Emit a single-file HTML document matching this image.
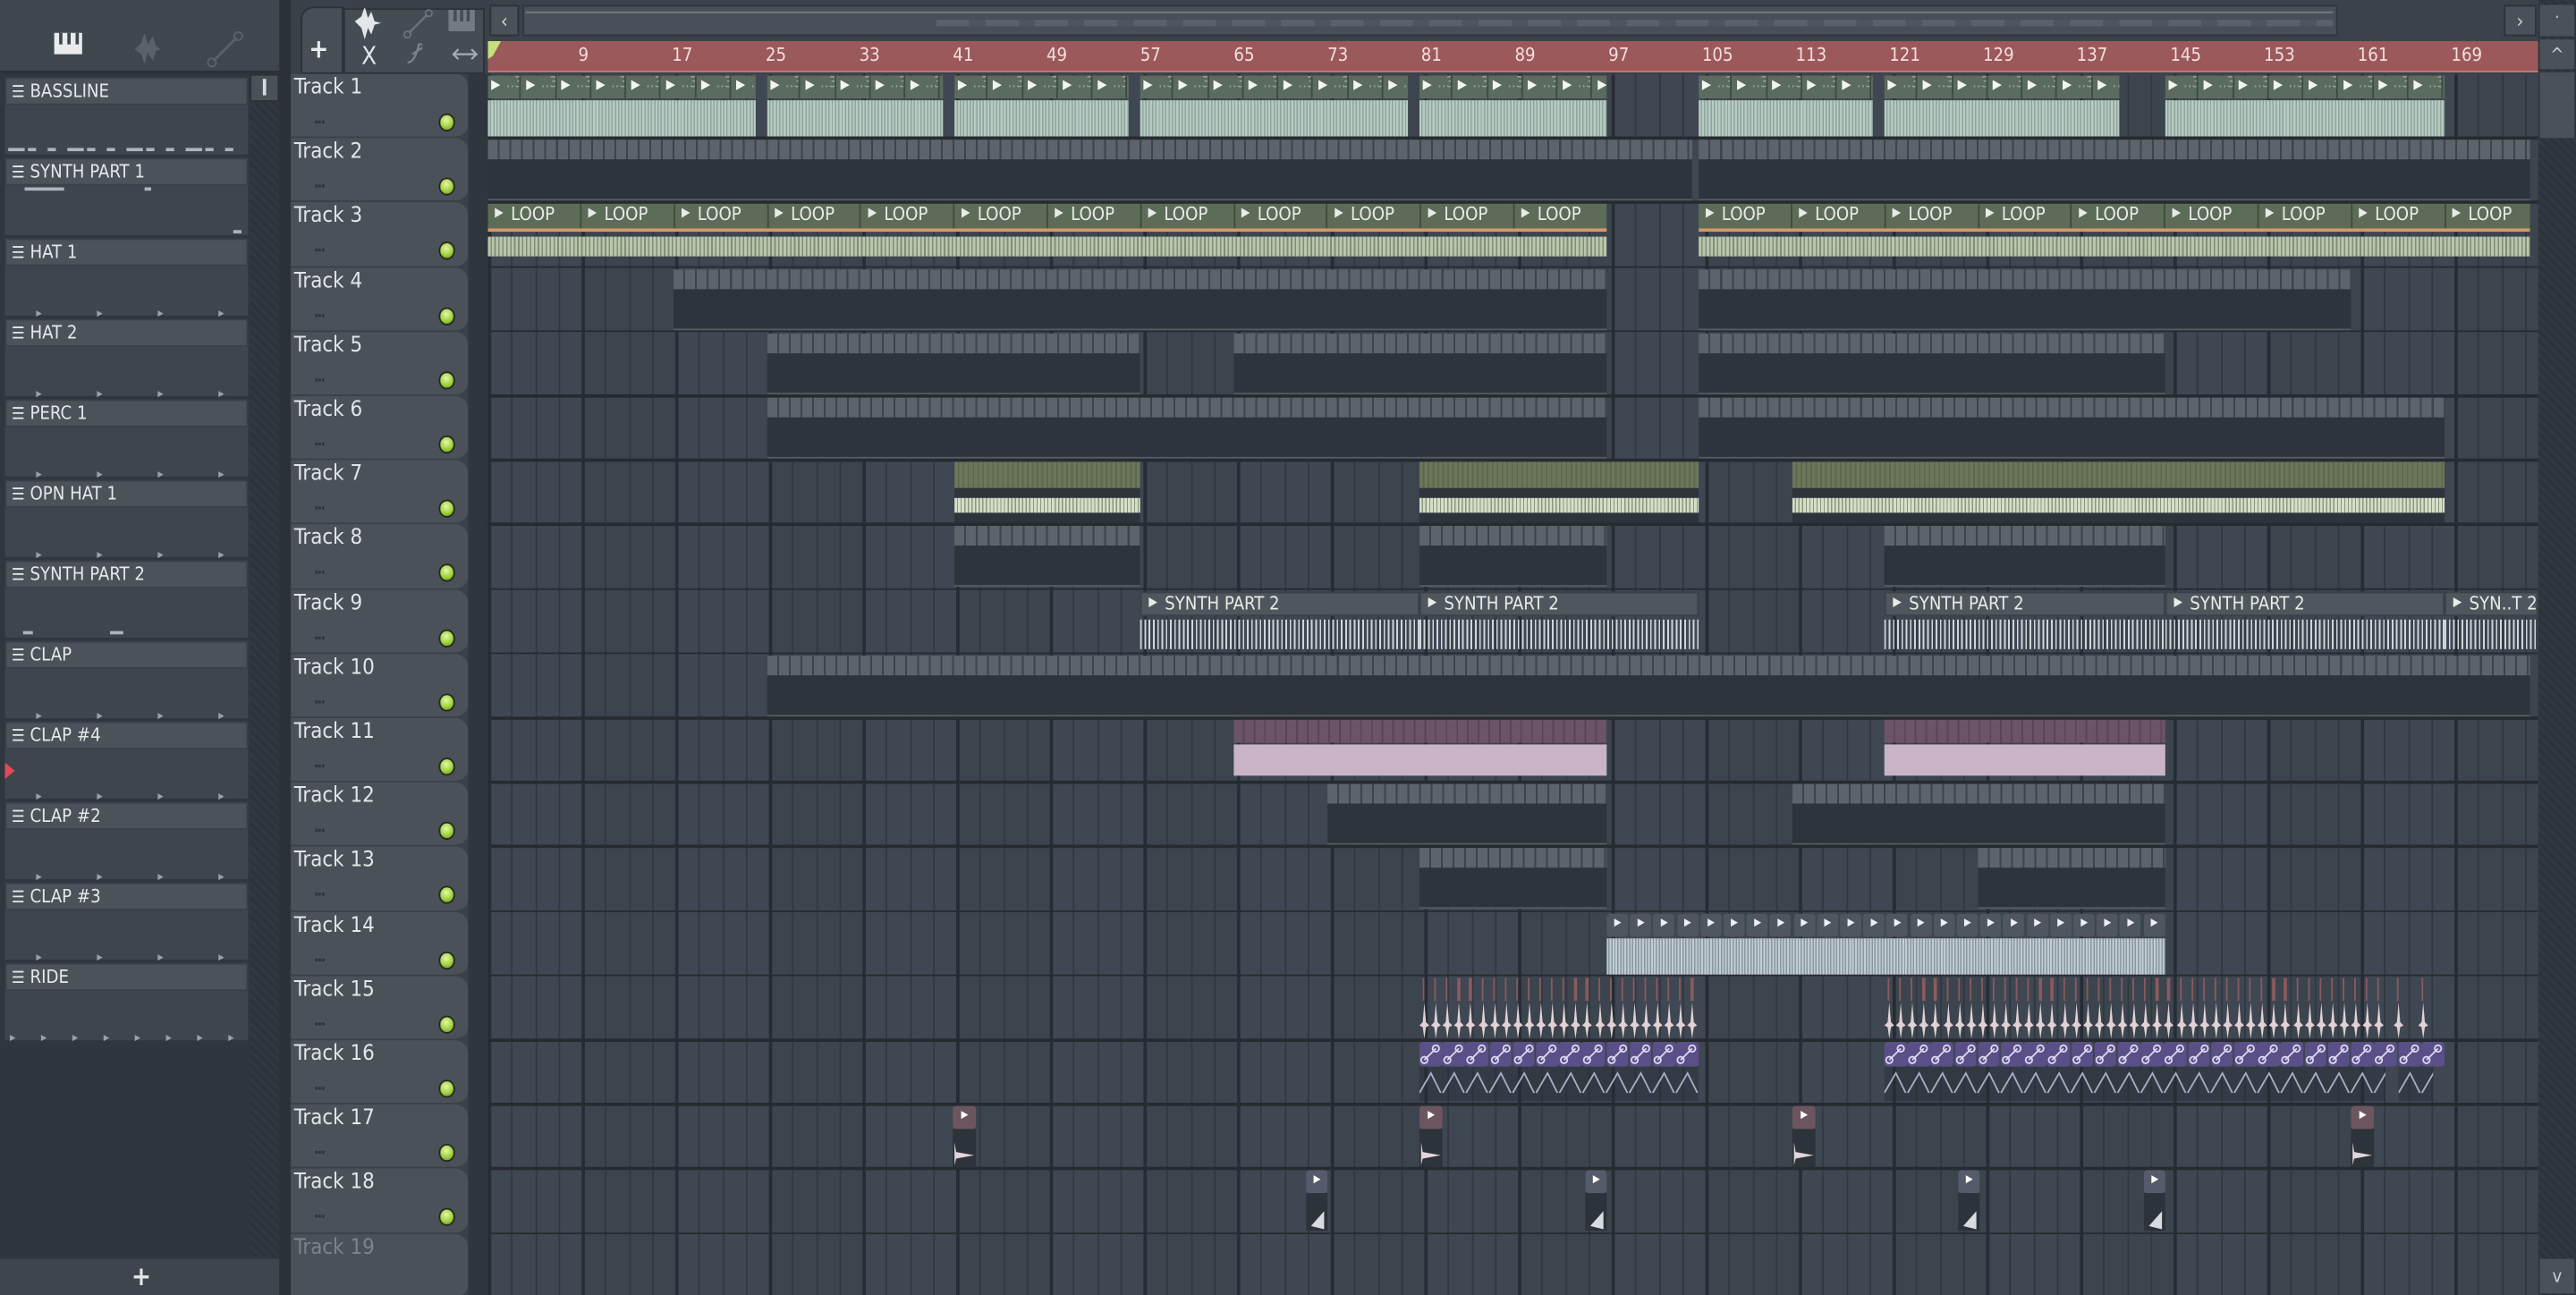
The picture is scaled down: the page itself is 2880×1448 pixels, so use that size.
<!DOCTYPE html>
<html><head><meta charset="utf-8">
<style>
html,body{margin:0;padding:0;background:#343b43;overflow:hidden;width:2880px;height:1448px}
#w{position:absolute;left:0;top:0;width:1568px;height:788px;transform:scale(1.836735,1.837563);transform-origin:0 0;background:#3a4149;font-family:"DejaVu Sans Condensed","Liberation Sans Narrow","Liberation Sans",sans-serif;overflow:hidden}
.a{position:absolute;box-sizing:border-box}
.tn{color:#e2e6e9;font-size:13px}
.pat{background:#2e343b}
.ph{background:repeating-linear-gradient(90deg,#5d636a 0 6px,#3d434a 6px 7.1px);}
.lbl{color:#e8ece6;font-size:11px;white-space:nowrap;overflow:hidden}
</style></head><body><div id="w">
<div class="a" style="left:0;top:0;width:172px;height:45px;background:#3f464e;border-bottom:2px solid #2b3137"></div>
<svg class="a" style="left:16;top:0" width="172" height="45">
<rect x="17" y="20" width="17" height="13" fill="#e8eaec"/><rect x="20" y="20" width="2" height="7" fill="#3f464e"/><rect x="25" y="20" width="2" height="7" fill="#3f464e"/><rect x="30" y="20" width="2" height="7" fill="#3f464e"/>
<path d="M66 30 L70 26 L72 20 L74 27 L77 22 L79 28 L82 30 L79 31 L77 37 L74 32 L72 39 L70 33Z" fill="#59616a"/>
<path d="M114 37 L128 23" stroke="#59616a" stroke-width="1.5"/><circle cx="113" cy="38" r="2.5" fill="none" stroke="#59616a"/><circle cx="129" cy="22" r="2.5" fill="none" stroke="#59616a"/>
</svg>
<div class="a" style="left:0;top:45px;width:172px;height:722px;background:#30363e"></div>
<div class="a" style="left:152px;top:45px;width:18px;height:720px;background:repeating-linear-gradient(45deg,#32383f 0 2px,#2d333a 2px 4px)"></div>
<div class="a" style="left:152px;top:45px;width:18px;height:17px;background:#4a5158;border:1px solid #2a2f35"></div>
<div class="a" style="left:160px;top:48px;width:2px;height:10px;background:#d8dcdf"></div>
<div class="a" style="left:0;top:766px;width:172px;height:22px;background:#3e454d;color:#e4e7ea;font-size:16px;text-align:center;line-height:22px;font-weight:bold">+</div>
<div class="a" style="left:170px;top:0;width:7px;height:788px;background:#2b3137"></div>
<div class="a" style="left:177px;top:0;width:120px;height:45px;background:#3a4149"></div>
<div class="a" style="left:183px;top:4px;width:26px;height:41px;background:#474e56;border-radius:8px 0 0 0;border:1px solid #2c3238"></div>
<div class="a" style="left:188px;top:20px;color:#e9ecee;font-size:16px;font-weight:bold">+</div>
<div class="a" style="left:209px;top:5px;width:86px;height:40px;background:#454c54;border:1px solid #2c3238"></div>
<svg class="a" style="left:209px;top:5px" width="86" height="40">
<path d="M7 9 L11 6 L13 0 L15 7 L17 3 L19 9 L23 10 L19 11 L17 17 L15 13 L13 20 L11 13Z" fill="#e4e7ea" transform="translate(0,-1)"/>
<path d="M40 15 L51 4" stroke="#6a727b" stroke-width="1.3"/><circle cx="39" cy="16" r="2" fill="none" stroke="#6a727b"/><circle cx="52" cy="3" r="2" fill="none" stroke="#6a727b"/>
<rect x="64" y="1" width="16" height="13" fill="#737b84"/><rect x="67" y="1" width="2" height="7" fill="#454c54"/><rect x="71" y="1" width="2" height="7" fill="#454c54"/><rect x="75" y="1" width="2" height="7" fill="#454c54"/>
<text x="11" y="34" fill="#e4e7ea" font-size="15" font-family="DejaVu Sans Condensed">X</text>
<path d="M39 33 C42 33 44 30 46 22 L48 22 M42 28 L48 24" stroke="#7b838c" stroke-width="1.2" fill="none"/>
<path d="M68 28 L80 28 M70 25 L67 28 L70 31 M78 25 L81 28 L78 31" stroke="#a6adb4" stroke-width="1.2" fill="none"/>
</svg>
<div class="a" style="left:297px;top:0;width:1248px;height:25px;background:#3b4249"></div>
<div class="a" style="left:298px;top:3px;width:18px;height:19px;background:#4a5158;border:1px solid #2c3238;color:#d0d4d8;font-size:12px;text-align:center;line-height:18px">‹</div>
<div class="a" style="left:318px;top:3px;width:1105px;height:19px;background:#47505a;border:1px solid #2f353c"></div>
<div class="a" style="left:320px;top:7px;width:1100px;height:1px;background:#6f8073"></div>
<div class="a" style="left:570px;top:12px;width:850px;height:4px;background:repeating-linear-gradient(90deg,#59626c 0 20px,#4d555e 20px 30px)"></div>
<div class="a" style="left:1524px;top:3px;width:20px;height:19px;background:#4a5158;border:1px solid #2c3238;color:#d0d4d8;font-size:12px;text-align:center;line-height:18px">›</div>
<div class="a" style="left:297px;top:25px;width:1248px;height:19px;background:#9b595b;border-bottom:1px solid #c47a7a"></div>
<svg class="a" style="left:297px;top:25px;z-index:2" width="10" height="12"><path d="M0 0 L8 0 L3 9 L0 11Z" fill="#c5e07a"/></svg>
<div class="a" style="left:1545px;top:0;width:23px;height:788px;background:repeating-linear-gradient(45deg,#32383f 0 2px,#2d333a 2px 4px)"></div>
<div class="a" style="left:1546px;top:3px;width:21px;height:19px;background:#4a5158;color:#ccd;font-size:10px;text-align:center;line-height:18px">·</div>
<div class="a" style="left:1546px;top:24px;width:21px;height:18px;background:#4a5158;color:#ccd;font-size:11px;text-align:center;line-height:20px">^</div>
<div class="a" style="left:1546px;top:44px;width:21px;height:40px;background:#4a5158"></div>
<div class="a" style="left:1546px;top:766px;width:21px;height:21px;background:#4a5158;color:#ccd;font-size:11px;text-align:center;line-height:21px">v</div>
<div class="a" style="left:285px;top:45px;width:12px;height:743px;background:#30363d"></div>
<div class="a" id="grid" style="left:297px;top:45px;width:1248px;height:743px;background:#3f4752;overflow:hidden"></div>
</div>
<script>
const W=document.getElementById('w');
function d(x,y,w,h,s,html,cls){const e=document.createElement('div');e.className='a '+(cls||'');e.style.cssText=`left:${x}px;top:${y}px;width:${w}px;height:${h}px;`+(s||'');if(html)e.innerHTML=html;W.appendChild(e);return e;}
const TY=i=>45+(i-1)*39.2;
const pats=[['BASSLINE','b'],['SYNTH PART 1','s'],['HAT 1','h'],['HAT 2','h2'],['PERC 1','p'],['OPN HAT 1','o'],['SYNTH PART 2','s2'],['CLAP','c'],['CLAP #4','c'],['CLAP #2','c'],['CLAP #3','c3'],['RIDE','r']];
pats.forEach((p,i)=>{const y=47+i*49;
d(3,y,148,17,'background:#4b5259;border:1px solid #3a4047;','<span style="position:absolute;left:3px;top:1px;color:#e5e8ea;font-size:11px"><b style="font-size:10px">☰</b> '+p[0]+'</span>');
d(3,y+17,148,30,'background:#3e454e;');
let marks='';
if(p[1]=='b'){for(let k=0;k<12;k++)marks+=`<div class="a" style="left:${5+k*12}px;top:${y+43}px;width:${k%3==0?10:5}px;height:2px;background:#aeb4ba"></div>`;}
else if(p[1]=='s'){marks=`<div class="a" style="left:15px;top:${y+18}px;width:24px;height:2px;background:#aeb4ba"></div><div class="a" style="left:88px;top:${y+18}px;width:4px;height:2px;background:#aeb4ba"></div><div class="a" style="left:142px;top:${y+44}px;width:5px;height:2px;background:#aeb4ba"></div>`;}
else if(p[1]=='s2'){marks=`<div class="a" style="left:14px;top:${y+43}px;width:6px;height:2px;background:#aeb4ba"></div><div class="a" style="left:67px;top:${y+43}px;width:8px;height:2px;background:#aeb4ba"></div>`;}
else{const n=p[1]=='r'?8:4;for(let k=0;k<n;k++)marks+=`<div class="a" style="left:${(p[1]=='r'?6:22)+k*(p[1]=='r'?19:37)}px;top:${y+43}px;color:#9aa1a8;font-size:5px">▶</div>`;}
const m=document.createElement('div');m.innerHTML=marks;W.appendChild(m);
});
d(3,459,6,9,'','<svg width="6" height="10"><path d="M0 0 L6 5 L0 10Z" fill="#e04b5a"/></svg>');
const bx=n=>297+(n-1)*7.125;
[9,17,25,33,41,49,57,65,73,81,89,97,105,113,121,129,137,145,153,161,169].forEach(n=>{d(bx(n)-2,27,30,16,'color:#f3dede;font-size:11px;',String(n));});
const G=document.getElementById('grid');let gh='';
for(let k=0;k<90;k++){const x=k*14.25;gh+=`<div class="a" style="left:${x}px;top:0;width:${k%4==0?1.5:1}px;height:743px;background:${k%4==0?'#272d34':'#313840'}"></div>`;
if(k%8>=4)gh+=`<div class="a" style="left:${x+1}px;top:0;width:13.25px;height:743px;background:rgba(0,0,0,0.04)"></div>`;}
for(let i=1;i<=19;i++)gh+=`<div class="a" style="left:0;top:${i*39.2-1}px;width:1248px;height:1.5px;background:#262b31"></div>`;
G.innerHTML=gh;
for(let i=1;i<=19;i++){const y=TY(i);
d(177,y,108,39.2,'background:#4a5158;border-radius:0 8px 8px 0;border-bottom:1px solid #3b4148;',`<div class="a tn" style="left:2px;top:1px;color:${i==19?'#7c838a':'#e2e6e9'}">Track ${i}</div>`+(i<19?`<div class="a" style="left:14px;top:23px;color:#2c3238;font-size:9px;font-weight:bold;letter-spacing:-1px">...</div><div class="a" style="left:90px;top:24px;width:10px;height:11px;border-radius:50%;background:radial-gradient(circle at 45% 35%,#e6f7a6,#9bcd36 60%,#5d7d1e);border:1px solid #232a22"></div>`:''));}
function pat(i,x1,x2){const y=TY(i);d(x1,y+1,x2-x1,12,'','','ph');d(x1,y+13,x2-x1,25,'border-bottom:1px solid #555c63;','','pat');}
[[297,460],[467,574],[581,687],[694,857],[864,978],[1034,1140],[1147,1290],[1318,1488]].forEach(([a,b])=>{const y=TY(1);
let h='';for(let x=0;x<b-a-4;x+=21.3)h+=`<div class="a" style="left:${x}px;top:0;width:20.3px;height:14px;overflow:hidden;border-right:1px solid #3e4a42"><span class="a" style="left:2px;top:1px;color:#f2f5f0;font-size:8px">▶</span><span class="a" style="left:11px;top:0;color:#98a59c;font-size:9px">..3</span></div>`;
d(a,y+1,b-a,14,'background:#5b6b5f;overflow:hidden',h);d(a,y+16,b-a,22,'background:repeating-linear-gradient(90deg,#b8cbc3 0 1.2px,#8ea69c 1.2px 2px);');});
pat(2,297,1030);pat(2,1034,1540);
[[297,978],[1034,1540]].forEach(([a,b])=>{const y=TY(3);let h='';for(let x=0;x<b-a-10;x+=56.8){h+=`<span class="a lbl" style="left:${x+2}px;top:0">⯈ LOOP</span><div class="a" style="left:${x+56}px;top:0;width:1px;height:15px;background:#3f4b3c"></div>`;}
d(a,y+1,b-a,15,'background:#5d6c58;overflow:hidden',h);d(a,y+16,b-a,2,'background:#d49a64');d(a,y+21,b-a,12,'background:repeating-linear-gradient(90deg,#b9c8ad 0 1.5px,#7f8f78 1.5px 2.4px);');});
[[4,410,978],[4,1034,1431],[5,467,694],[5,751,978],[5,1034,1318],[6,467,978],[6,1034,1488],[8,581,694],[8,864,978],[8,1147,1318],[10,467,1540],[12,808,978],[12,1091,1318],[13,864,978],[13,1204,1318]].forEach(c=>pat(...c));
[[581,694],[864,1034],[1091,1488]].forEach(([a,b])=>{const y=TY(7);d(a,y+1,b-a,16,'background:repeating-linear-gradient(90deg,#6c7659 0 2px,#5e684c 2px 3px);');d(a,y+17,b-a,21,'background:#2e343b');d(a,y+23,b-a,9,'background:repeating-linear-gradient(90deg,#d5dfc8 0 1.5px,#8c967f 1.5px 2.2px);');});
[[694,864],[864,1034],[1147,1318],[1318,1488],[1488,1545]].forEach(([a,b])=>{const y=TY(9);d(a,y+1,b-a,15,'background:#4f565e;border:1px solid #3b4148;',`<span class="a lbl" style="left:2px;top:0">⯈ ${b-a<80?'SYN..T 2':'SYNTH PART 2'}</span>`);d(a,y+18,b-a,18,'background:repeating-linear-gradient(90deg,#cfd6da 0 1px,rgba(0,0,0,0) 1px 2.6px);');});
[[751,978],[1147,1318]].forEach(([a,b])=>{const y=TY(11);d(a,y+1,b-a,14,'background:repeating-linear-gradient(90deg,#6c5467 0 5.5px,#5a4556 5.5px 6.5px);');d(a,y+16,b-a,19,'background:#c8b4c6;');});
{const y=TY(14),a=978,b=1318;let h='';for(let x=0;x<b-a;x+=14.2)h+=`<div class="a" style="left:${x}px;top:0;width:13px;height:14px;background:#4f565e;border-radius:2px;color:#eef;font-size:9px;text-align:center;line-height:14px">⯈</div>`;d(a,y+1,b-a,14,'',h);d(a,y+16,b-a,22,'background:repeating-linear-gradient(90deg,#c2cdd3 0 1px,#8997a0 1px 1.8px);');}
[[864,1034,7.1],[1147,1450,7.1],[1457,1465,8],[1472,1480,8]].forEach(([a,b,p])=>{const y=TY(15);let h='';for(let x=0;x<b-a-3;x+=p)h+=`<div class="a" style="left:${x+2}px;top:0;width:1.3px;height:14px;background:#8a5a5e"></div><svg class="a" style="left:${x}px;top:15px" width="6" height="22"><path d="M3 0 L4 12 L6 14 L4 15 L3 22 L2 15 L0 14 L2 12Z" fill="#e0d2d4"/></svg>`;d(a,y+1,b-a,37,'',h);});
[[864,1034],[1147,1452],[1460,1481]].forEach(([a,b])=>{const y=TY(16);let h='',z='';for(let x=0;x<b-a-3;x+=14.2){h+=`<div class="a" style="left:${x}px;top:0;width:13.5px;height:15px;background:#5b4f87;border-radius:2px"><svg width="13" height="15"><path d="M3 11 L10 4" stroke="#dcd8f0" stroke-width="1"/><circle cx="3" cy="11" r="2" fill="none" stroke="#dcd8f0"/><circle cx="10" cy="4" r="2" fill="none" stroke="#dcd8f0"/></svg></div>`;z+=`M${x} 15 L${x+7} 3 L${x+13} 15 `;}
d(a,y+16,b-a,21,'background:rgba(40,45,55,0.45)');
d(a,y+1,b-a,37,'',h+`<svg class="a" style="left:0;top:16px" width="${b-a}" height="20"><path d="${z}" stroke="#a9adc4" fill="none" stroke-width="1"/></svg>`);});
[580,864,1091,1431].forEach(a=>{const y=TY(17);d(a,y+1,14,14,'background:#6d5560;border-radius:2px;color:#fff;font-size:9px;text-align:center;line-height:14px','⯈');d(a,y+15,14,23,'background:#2d333a','<svg width="14" height="23"><path d="M1 8 L2 14 L13 16 L2 18 L1 22Z" fill="#e4d4dc"/></svg>');});
[795,965,1192,1305].forEach(a=>{const y=TY(18);d(a,y+1,13,14,'background:#555b6a;border-radius:2px;color:#fff;font-size:9px;text-align:center;line-height:14px','⯈');d(a,y+15,13,23,'background:#2d333a','<svg width="13" height="23"><path d="M11 11 L11 22 L3 20Z" fill="#d8dbe0"/></svg>');});
</script>
</body></html>
